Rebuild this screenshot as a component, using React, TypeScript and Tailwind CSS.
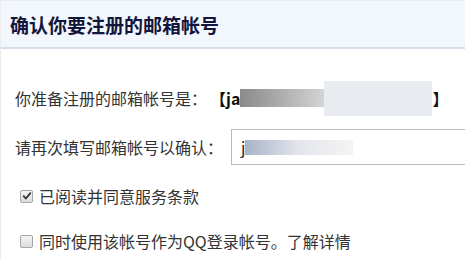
import React from 'react';

const font = { fontFamily: '"Microsoft YaHei", "Noto Sans CJK SC", "Noto Sans", sans-serif' };

const Box = ({ checked }: { checked?: boolean }) => (
  <span className="relative inline-flex h-[13px] w-[13px] shrink-0 items-center justify-center rounded-[2px] border border-[#a6a6a6] bg-gradient-to-b from-[#f4f4f4] to-[#dcdcdc]">
    {checked && (
      <svg viewBox="0 0 12 12" className="h-[10px] w-[10px]">
        <path d="M2 6.2 L4.6 9 L10 2.6" fill="none" stroke="#333" strokeWidth="2.2" strokeLinecap="round" strokeLinejoin="round" />
      </svg>
    )}
  </span>
);

const App = () => {
  return (
    <div className="h-[260px] w-[465px] overflow-hidden border-l border-[#ececec] bg-white text-[#333]" style={font}>
      {/* Header */}
      <div className="flex h-[49px] items-center border-t border-b-2 border-t-[#e8edf5] border-b-[#d6deea] bg-[#f2f7fe] pl-[9px]">
        <h1 className="text-[19px] font-bold leading-none text-[#12163a]">确认你要注册的邮箱帐号</h1>
      </div>

      <div className="pl-[14px] pt-[37px]">
        {/* Line 1 */}
        <div className="flex h-6 items-center text-[16px] leading-6">
          <span>你准备注册的邮箱帐号是：</span>
          <span className="ml-[3px] font-bold text-[#111]">【ja</span>
          <span className="h-[18px] w-[84px] shrink-0 bg-gradient-to-r from-[#8a8a8a] to-[#d4d4d4]" />
          <span className="h-[35px] w-[108px] shrink-0 bg-[#e8ecf0]" />
          <span className="font-bold text-[#111]">】</span>
        </div>

        {/* Line 2 */}
        <div className="mt-[19px] flex items-center text-[16px]">
          <span className="shrink-0">请再次填写邮箱帐号以确认：</span>
          <div className="ml-[8px] flex h-[36px] w-[260px] shrink-0 items-center border border-[#b9b9b9] pl-[9px]">
            <span className="text-[#222]">j</span>
            <span className="h-[15px] w-[108px] bg-gradient-to-r from-[#a9b2c8] via-[#e4e6ec] to-[#f4f4f4]" />
          </div>
        </div>

        {/* Checkboxes */}
        <div className="ml-[5px] mt-[21px] flex h-5 items-center gap-[6px] text-[16px]">
          <Box checked />
          <span>已阅读并同意服务条款</span>
        </div>
        <div className="ml-[5px] mt-[25px] flex h-5 items-center gap-[6px] text-[16px]">
          <Box />
          <span>
            同时使用该帐号作为QQ登录帐号。<span className="text-[#333]">了解详情</span>
          </span>
        </div>
      </div>
    </div>
  );
};

export default App;
